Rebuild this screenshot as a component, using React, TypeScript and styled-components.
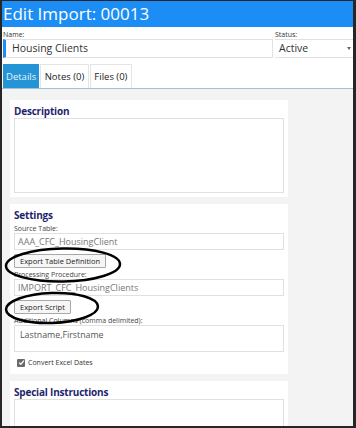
import styled, { createGlobalStyle } from "styled-components";

const GlobalStyle = createGlobalStyle`
  html, body { margin: 0; padding: 0; background: #fff; }
  body { font-family: "Open Sans", "Noto Sans", sans-serif; color: #333; }
  * { box-sizing: border-box; }
`;

const Frame = styled.div`
  position: relative;
  width: 356px;
  height: 428px;
  border: 1px solid #262626;
  border-left-width: 2px;
  border-right-width: 3px;
  border-bottom-width: 2px;
  overflow: hidden;
  display: flex;
  flex-direction: column;
  background: #fff;
`;

const Header = styled.h1`
  margin: 0;
  height: 26px;
  background: #1b8df4;
  color: #fff;
  font-size: 17px;
  font-weight: 400;
  line-height: 26px;
  padding-left: 1px;
  white-space: nowrap;
`;

const TopRow = styled.div`
  display: flex;
  gap: 2px;
  padding: 4px 0 0 1px;
`;

const Field = styled.div<{ $w?: number }>`
  display: flex;
  flex-direction: column;
  width: ${(p) => (p.$w ? `${p.$w}px` : "auto")};
  flex: ${(p) => (p.$w ? "none" : "1")};
`;

const TinyLabel = styled.label`
  font-size: 7px;
  line-height: 8px;
  height: 8px;
  color: #333;
  white-space: nowrap;
`;

const NameBox = styled.div`
  height: 19px;
  border: 1px solid #e2e2e2;
  border-left: 3px solid #1b8df4;
  font-size: 10.5px;
  line-height: 17px;
  padding-left: 6px;
  color: #333;
`;

const SelectBox = styled.div`
  position: relative;
  height: 19px;
  border-top: 1px solid #e2e2e2;
  border-bottom: 1px solid #e2e2e2;
  font-size: 10.5px;
  line-height: 17px;
  padding-left: 4px;
  color: #333;
  &::after {
    content: "";
    position: absolute;
    right: 2px;
    top: 7px;
    border-left: 2.5px solid transparent;
    border-right: 2.5px solid transparent;
    border-top: 3px solid #666;
  }
`;

const Tabs = styled.div`
  display: flex;
  margin-top: 6px;
  padding-left: 1px;
  border-bottom: 1px solid #9cc3cf;
`;

const Tab = styled.div<{ $active?: boolean }>`
  height: 24px;
  padding: 0 ${(p) => (p.$active ? 2 : 3.5)}px;
  font-size: 9.5px;
  line-height: 24px;
  white-space: nowrap;
  background: ${(p) => (p.$active ? "#2494d6" : "#fff")};
  color: ${(p) => (p.$active ? "#e6f3fb" : "#222")};
  border: 1px solid ${(p) => (p.$active ? "#2494d6" : "#e4e4e4")};
  border-bottom: none;
  margin-right: 1px;
`;

const Content = styled.div`
  flex: 1;
  background: #f3f3f3;
  padding: 11px 0 0 8px;
  display: flex;
  flex-direction: column;
  gap: 7px;
`;

const Card = styled.section`
  width: 278px;
  background: #fff;
  padding: 4px;
  display: flex;
  flex-direction: column;
`;

const CardTitle = styled.h2`
  margin: 0;
  font-size: 10px;
  letter-spacing: -0.2px;
  line-height: 14px;
  font-weight: 700;
  color: #1f1f6e;
`;

const SmallLabel = styled.label`
  font-size: 7px;
  line-height: 9px;
  height: 9px;
  color: #444;
  white-space: nowrap;
  margin-top: 2px;
`;

const Input = styled.div`
  height: 17px;
  border: 1px solid #e0e0e0;
  font-size: 9px;
  line-height: 15px;
  padding-left: 3px;
  color: #777;
  white-space: nowrap;
`;

const TextArea = styled.div<{ $h: number }>`
  height: ${(p) => p.$h}px;
  border: 1px solid #e0e0e0;
  font-size: 8.8px;
  line-height: 12px;
  padding: 3px 5px;
  color: #555;
`;

const Button = styled.button`
  align-self: flex-start;
  height: 14px;
  margin: 4px 0 0;
  padding: 0 5px;
  font-family: inherit;
  font-size: 7.5px;
  line-height: 12px;
  color: #222;
  background: #f6f6f6;
  border: 1px solid #a8a8a8;
  border-radius: 1px;
  white-space: nowrap;
`;

const CheckRow = styled.div`
  display: flex;
  align-items: center;
  gap: 3px;
  margin: 6px 0 3px 3px;
  font-size: 7px;
  color: #333;
`;

const Check = styled.span`
  width: 8px;
  height: 8px;
  border-radius: 1px;
  background: #6a6a6a;
  display: flex;
  align-items: center;
  justify-content: center;
`;

const Marks = styled.svg`
  position: absolute;
  left: 0;
  top: 0;
  pointer-events: none;
`;

export default function App() {
  return (
    <>
      <GlobalStyle />
      <Frame>
        <Header>Edit Import: 00013</Header>
        <TopRow>
          <Field>
            <TinyLabel>Name:</TinyLabel>
            <NameBox>Housing Clients</NameBox>
          </Field>
          <Field $w={78}>
            <TinyLabel>Status:</TinyLabel>
            <SelectBox>Active</SelectBox>
          </Field>
        </TopRow>
        <Tabs>
          <Tab $active>Details</Tab>
          <Tab>Notes (0)</Tab>
          <Tab>Files (0)</Tab>
        </Tabs>
        <Content>
          <Card>
            <CardTitle>Description</CardTitle>
            <TextArea $h={75} />
          </Card>
          <Card>
            <CardTitle>Settings</CardTitle>
            <SmallLabel>Source Table:</SmallLabel>
            <Input>AAA_CFC_HousingClient</Input>
            <Button>Export Table Definition</Button>
            <SmallLabel>Processing Procedure:</SmallLabel>
            <Input>IMPORT_CFC_HousingClients</Input>
            <Button>Export Script</Button>
            <SmallLabel>Additional Columns (comma delimited):</SmallLabel>
            <TextArea $h={27}>Lastname,Firstname</TextArea>
            <CheckRow>
              <Check>
                <svg width="7" height="7" viewBox="0 0 8 8">
                  <path d="M1.3 4.2 L3.2 6 L6.8 1.8" fill="none" stroke="#fff" strokeWidth="1.4" />
                </svg>
              </Check>
              Convert Excel Dates
            </CheckRow>
          </Card>
          <Card>
            <CardTitle>Special Instructions</CardTitle>
            <TextArea $h={60} />
          </Card>
        </Content>
        <Marks width="356" height="428" viewBox="0 0 356 428">
          <ellipse cx="61" cy="264" rx="57" ry="16.5" transform="rotate(-1 61 264)" fill="none" stroke="#000" strokeWidth="2.5" />
          <ellipse cx="50" cy="307" rx="46" ry="15" transform="rotate(-2 50 307)" fill="none" stroke="#000" strokeWidth="2.5" />
        </Marks>
      </Frame>
    </>
  );
}
